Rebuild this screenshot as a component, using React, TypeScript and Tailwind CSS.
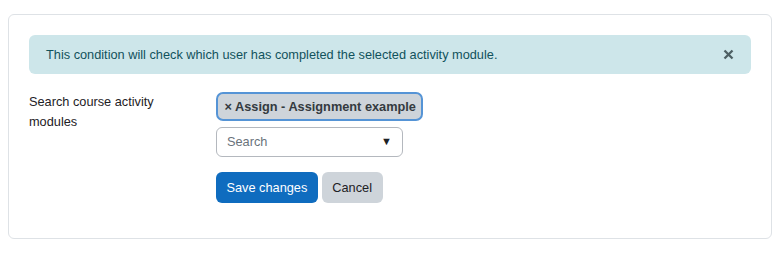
import React from "react";

export default function App() {
  return (
    <div className="w-[780px] h-[260px] bg-white pt-[14px] pl-[8px] text-[12.75px] leading-[19.5px] text-[#1d2125] [font-family:'Liberation_Sans',Arial,sans-serif]">
      <div className="w-[764px] h-[225px] border border-[#dee2e6] rounded-[6px] p-[20px]">
        <div className="flex items-center justify-between h-[39px] rounded-[6px] bg-[#cde6ea] pl-[17px] pr-[17px] text-[#11525c]">
          <span>This condition will check which user has completed the selected activity module.</span>
          <svg width="11" height="11" viewBox="0 0 11 11">
            <path d="M1.5 1.5 L9.5 9.5 M9.5 1.5 L1.5 9.5" stroke="#4d5f63" strokeWidth="2.3" strokeLinecap="butt" />
          </svg>
        </div>
        <div className="flex mt-[18px]">
          <div className="w-[187px] pr-[30px] shrink-0">Search course activity modules</div>
          <div className="flex flex-col items-start">
            <span className="h-[29px] flex items-center rounded-[7px] border-[2.5px] border-[#5594d6] bg-[#ced4da] pl-[6.5px] pr-[5.5px] font-bold text-[#343a40] whitespace-nowrap">
              × Assign - Assignment example
            </span>
            <div className="mt-[6px] w-[187px] h-[30px] flex items-center justify-between rounded-[6px] border border-[#b4b8be] pl-[10px] pr-[10px]">
              <span className="text-[#6a737b]">Search</span>
              <span className="text-[11px] text-[#1d2125]">▼</span>
            </div>
            <div className="mt-[15px] flex gap-[4px]">
              <button className="h-[31px] px-[10.5px] rounded-[6px] bg-[#0f6cbf] text-white">Save changes</button>
              <button className="h-[31px] px-[10.5px] rounded-[6px] bg-[#ced4da] text-[#1d2125]">Cancel</button>
            </div>
          </div>
        </div>
      </div>
    </div>
  );
}
